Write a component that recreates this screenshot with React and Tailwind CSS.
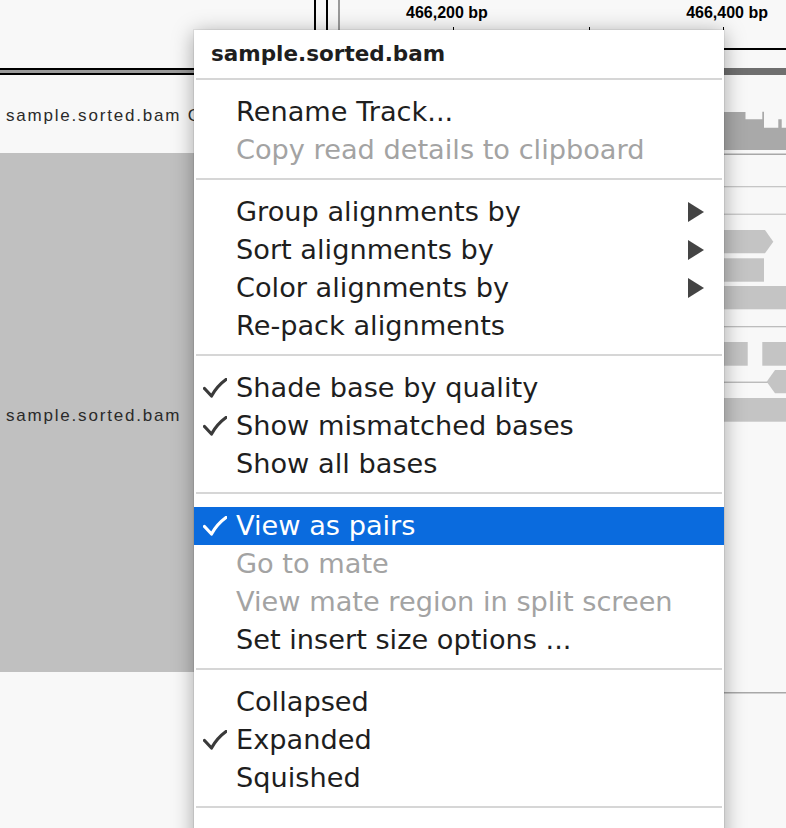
import clsx from "clsx";

// IGV alignment track popup menu over the track panel

const sections = [
    [
        { label: "Rename Track..." },
        { label: "Copy read details to clipboard", disabled: true },
    ],
    [
        { label: "Group alignments by", sub: true },
        { label: "Sort alignments by", sub: true },
        { label: "Color alignments by", sub: true },
        { label: "Re-pack alignments" },
    ],
    [
        { label: "Shade base by quality", checked: true },
        { label: "Show mismatched bases", checked: true },
        { label: "Show all bases" },
    ],
    [
        { label: "View as pairs", checked: true, active: true },
        { label: "Go to mate", disabled: true },
        { label: "View mate region in split screen", disabled: true },
        { label: "Set insert size options ..." },
    ],
    [
        { label: "Collapsed" },
        { label: "Expanded", checked: true },
        { label: "Squished" },
    ],
    [
        { label: "Select by name...", disabled: true },
        { label: "Clear selections", disabled: true },
    ],
];

function Check({ color }) {
    return (
        <svg width="24" height="20" viewBox="0 0 24 20">
            <path d="M1.5 10.5 L8.5 18 Q14 8 23 1.5" fill="none" stroke={color} strokeWidth="3.2" strokeLinecap="round" strokeLinejoin="round" />
        </svg>
    );
}

function MenuItem({ item }) {
    const { label, checked, disabled, sub, active } = item;
    return (
        <div
            className={clsx(
                "flex items-center h-[38px] leading-[38px] whitespace-nowrap",
                active ? "bg-[#0a6bde] text-white" : disabled ? "text-[#a3a3a3]" : "text-[#1e1e1e]"
            )}
        >
            <div className="w-[42px] h-full flex items-center pl-[9px]">
                {checked && <Check color={active ? "#ffffff" : "#3a3a3a"} />}
            </div>
            <span>{label}</span>
            {sub && (
                <svg className="ml-auto mr-[20px]" width="16" height="20" viewBox="0 0 16 20">
                    <polygon points="0,0 16,10 0,20" fill="#444444" />
                </svg>
            )}
        </div>
    );
}

function PopupMenu() {
    return (
        <div className="absolute left-[194px] top-[30px] w-[530px] bg-white shadow-[0_0_0_1px_rgba(0,0,0,0.06),0_3px_20px_rgba(0,0,0,0.35)] font-['DejaVu_Sans',sans-serif] text-[27.2px]">
            <div className="h-[48px] flex items-center pl-[17px] font-bold text-[21.5px] text-[#1e1e1e]">
                sample.sorted.bam
            </div>
            <div className="mx-[2px] h-[2px] bg-[#d6d6d6] mb-[13px]" />
            {sections.map((section, i) => (
                <div key={i}>
                    {i > 0 && <div className="mx-[2px] mt-[9px] mb-[13px] h-[2px] bg-[#d6d6d6]" />}
                    {section.map((item) => (
                        <MenuItem key={item.label} item={item} />
                    ))}
                </div>
            ))}
        </div>
    );
}

function AlignmentCanvas() {
    return (
        <svg width="446" height="753" viewBox="340 75 446 753" className="block">
            {/* coverage */}
            <polygon
                points="700,150 700,112 745.5,112 745.5,119.3 762.3,119.3 762.3,111.7 764,111.7 764,127.7 778.3,127.7 778.3,119.3 781.7,119.3 781.7,127.7 786,127.7 786,150"
                fill="#a9a9a9"
            />
            <rect x="340" y="153.5" width="446" height="1.5" fill="#a8a8a8" />

            {/* pair lines */}
            <rect x="340" y="186" width="446" height="1.3" fill="#c6c6c6" />
            <rect x="340" y="213.6" width="446" height="1.3" fill="#c6c6c6" />
            <rect x="340" y="326" width="446" height="1.3" fill="#bdbdbd" />
            <rect x="340" y="381.6" width="428" height="1.3" fill="#b4b4b4" />

            {/* reads */}
            <polygon points="700,230 765,230 773.3,241.7 765,253.3 700,253.3" fill="#c4c4c4" />
            <rect x="700" y="258.3" width="64" height="23.4" fill="#c4c4c4" />
            <rect x="700" y="286" width="86" height="23.3" fill="#c4c4c4" />
            <rect x="700" y="342" width="47.7" height="23.7" fill="#c4c4c4" />
            <rect x="762.3" y="342" width="24" height="23.7" fill="#c4c4c4" />
            <polygon points="766.7,381.7 775,370 786,370 786,393.3 775,393.3" fill="#c4c4c4" />
            <rect x="700" y="398" width="86" height="23.7" fill="#c4c4c4" />

            <rect x="340" y="692" width="446" height="1.5" fill="#a8a8a8" />
        </svg>
    );
}

export default function App() {
    return (
        <div className="relative w-[786px] h-[828px] overflow-hidden bg-[#f8f8f8] font-['Liberation_Sans',Arial,sans-serif]">
            {/* ruler header */}
            <div className="flex h-[68px]">
                <div className="w-[314px]" />
                <div className="w-[2px] bg-black" />
                <div className="w-[10px]" />
                <div className="w-[2px] bg-black" />
                <div className="w-[10px]" />
                <div className="w-[2px] bg-[#9a9a9a]" />
                <div className="flex-1 flex flex-col">
                    <div className="flex justify-between pl-[66px] pr-[18px] pt-[5px] text-[16px] leading-4 font-bold text-black">
                        <span>466,200 bp</span>
                        <span>466,400 bp</span>
                    </div>
                    <div className="flex mt-[6px] h-[4px]">
                        <div className="ml-[113px] w-px bg-black" />
                        <div className="ml-[135px] w-px bg-black" />
                        <div className="ml-[133px] w-px bg-black" />
                    </div>
                    <div className="mt-auto mb-[18px] h-[2px] bg-black" />
                </div>
            </div>

            {/* panel divider */}
            <div className="flex h-[7px]">
                <div className="w-[340px] flex flex-col">
                    <div className="h-[2px] bg-black" />
                    <div className="h-[3px] bg-[#9a9a9a]" />
                    <div className="h-[2px] bg-black" />
                </div>
                <div className="flex-1 bg-[#6f6f6f]" />
            </div>

            {/* tracks */}
            <div className="flex">
                <div className="w-[340px] flex flex-col text-[17px] tracking-[1.8px] text-[#2a2a2a] whitespace-nowrap">
                    <div className="h-[78px] w-[194px] flex items-center pl-[6px] pt-[4px] overflow-hidden">
                        sample.sorted.bam Coverage
                    </div>
                    <div className="h-[519px] bg-[#c0c0c0] flex items-center pl-[6px] pt-[7px]">
                        sample.sorted.bam
                    </div>
                </div>
                <div className="flex-1">
                    <AlignmentCanvas />
                </div>
            </div>

            <PopupMenu />
        </div>
    );
}
